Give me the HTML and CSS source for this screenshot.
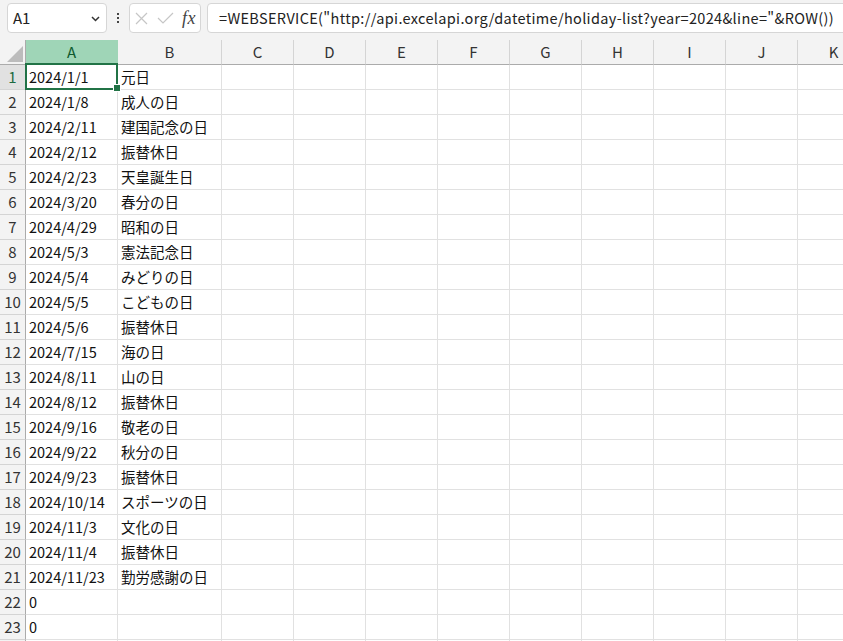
FILE: index.html
```html
<!DOCTYPE html>
<html lang="ja">
<head>
<meta charset="utf-8">
<title>Excel</title>
<link rel="stylesheet" href="styles.css">
</head>
<body>
<div class="topbar">
  <div class="namebox">
    <span class="nb-text">A1</span>
    <svg class="chev" width="9" height="6" viewBox="0 0 9 6"><polyline points="1,1 4.5,4.5 8,1" fill="none" stroke="#333" stroke-width="1.5"/></svg>
  </div>
  <div class="dots"><span></span><span></span><span></span></div>
  <div class="fxbox">
    <svg class="ico-x" width="13" height="13" viewBox="0 0 13 13"><path d="M1 1 L12 12 M12 1 L1 12" stroke="#c6c6c6" stroke-width="1.2" fill="none"/></svg>
    <svg class="ico-ok" width="17" height="12" viewBox="0 0 17 12"><path d="M1 6 L6 11 L16 1" stroke="#c6c6c6" stroke-width="1.2" fill="none"/></svg>
    <span class="fx">fx</span>
  </div>
  <div class="formula">=WEBSERVICE("http://api.excelapi.org/datetime/holiday-list?year=2024&amp;line="&amp;ROW())</div>
</div>

<div class="sheet">
  <div class="row head">
    <div class="corner"><span class="tri"></span></div>
    <div class="ch sel">A</div><div class="ch">B</div><div class="ch">C</div><div class="ch">D</div><div class="ch">E</div><div class="ch">F</div><div class="ch">G</div><div class="ch">H</div><div class="ch">I</div><div class="ch">J</div><div class="ch">K</div>
  </div>
  <div class="row"><div class="rh rsel">1</div><div class="c active">2024/1/1</div><div class="c">元日</div><div class="c"></div><div class="c"></div><div class="c"></div><div class="c"></div><div class="c"></div><div class="c"></div><div class="c"></div><div class="c"></div><div class="c"></div></div>
  <div class="row"><div class="rh">2</div><div class="c">2024/1/8</div><div class="c">成人の日</div><div class="c"></div><div class="c"></div><div class="c"></div><div class="c"></div><div class="c"></div><div class="c"></div><div class="c"></div><div class="c"></div><div class="c"></div></div>
  <div class="row"><div class="rh">3</div><div class="c">2024/2/11</div><div class="c">建国記念の日</div><div class="c"></div><div class="c"></div><div class="c"></div><div class="c"></div><div class="c"></div><div class="c"></div><div class="c"></div><div class="c"></div><div class="c"></div></div>
  <div class="row"><div class="rh">4</div><div class="c">2024/2/12</div><div class="c">振替休日</div><div class="c"></div><div class="c"></div><div class="c"></div><div class="c"></div><div class="c"></div><div class="c"></div><div class="c"></div><div class="c"></div><div class="c"></div></div>
  <div class="row"><div class="rh">5</div><div class="c">2024/2/23</div><div class="c">天皇誕生日</div><div class="c"></div><div class="c"></div><div class="c"></div><div class="c"></div><div class="c"></div><div class="c"></div><div class="c"></div><div class="c"></div><div class="c"></div></div>
  <div class="row"><div class="rh">6</div><div class="c">2024/3/20</div><div class="c">春分の日</div><div class="c"></div><div class="c"></div><div class="c"></div><div class="c"></div><div class="c"></div><div class="c"></div><div class="c"></div><div class="c"></div><div class="c"></div></div>
  <div class="row"><div class="rh">7</div><div class="c">2024/4/29</div><div class="c">昭和の日</div><div class="c"></div><div class="c"></div><div class="c"></div><div class="c"></div><div class="c"></div><div class="c"></div><div class="c"></div><div class="c"></div><div class="c"></div></div>
  <div class="row"><div class="rh">8</div><div class="c">2024/5/3</div><div class="c">憲法記念日</div><div class="c"></div><div class="c"></div><div class="c"></div><div class="c"></div><div class="c"></div><div class="c"></div><div class="c"></div><div class="c"></div><div class="c"></div></div>
  <div class="row"><div class="rh">9</div><div class="c">2024/5/4</div><div class="c">みどりの日</div><div class="c"></div><div class="c"></div><div class="c"></div><div class="c"></div><div class="c"></div><div class="c"></div><div class="c"></div><div class="c"></div><div class="c"></div></div>
  <div class="row"><div class="rh">10</div><div class="c">2024/5/5</div><div class="c">こどもの日</div><div class="c"></div><div class="c"></div><div class="c"></div><div class="c"></div><div class="c"></div><div class="c"></div><div class="c"></div><div class="c"></div><div class="c"></div></div>
  <div class="row"><div class="rh">11</div><div class="c">2024/5/6</div><div class="c">振替休日</div><div class="c"></div><div class="c"></div><div class="c"></div><div class="c"></div><div class="c"></div><div class="c"></div><div class="c"></div><div class="c"></div><div class="c"></div></div>
  <div class="row"><div class="rh">12</div><div class="c">2024/7/15</div><div class="c">海の日</div><div class="c"></div><div class="c"></div><div class="c"></div><div class="c"></div><div class="c"></div><div class="c"></div><div class="c"></div><div class="c"></div><div class="c"></div></div>
  <div class="row"><div class="rh">13</div><div class="c">2024/8/11</div><div class="c">山の日</div><div class="c"></div><div class="c"></div><div class="c"></div><div class="c"></div><div class="c"></div><div class="c"></div><div class="c"></div><div class="c"></div><div class="c"></div></div>
  <div class="row"><div class="rh">14</div><div class="c">2024/8/12</div><div class="c">振替休日</div><div class="c"></div><div class="c"></div><div class="c"></div><div class="c"></div><div class="c"></div><div class="c"></div><div class="c"></div><div class="c"></div><div class="c"></div></div>
  <div class="row"><div class="rh">15</div><div class="c">2024/9/16</div><div class="c">敬老の日</div><div class="c"></div><div class="c"></div><div class="c"></div><div class="c"></div><div class="c"></div><div class="c"></div><div class="c"></div><div class="c"></div><div class="c"></div></div>
  <div class="row"><div class="rh">16</div><div class="c">2024/9/22</div><div class="c">秋分の日</div><div class="c"></div><div class="c"></div><div class="c"></div><div class="c"></div><div class="c"></div><div class="c"></div><div class="c"></div><div class="c"></div><div class="c"></div></div>
  <div class="row"><div class="rh">17</div><div class="c">2024/9/23</div><div class="c">振替休日</div><div class="c"></div><div class="c"></div><div class="c"></div><div class="c"></div><div class="c"></div><div class="c"></div><div class="c"></div><div class="c"></div><div class="c"></div></div>
  <div class="row"><div class="rh">18</div><div class="c">2024/10/14</div><div class="c">スポーツの日</div><div class="c"></div><div class="c"></div><div class="c"></div><div class="c"></div><div class="c"></div><div class="c"></div><div class="c"></div><div class="c"></div><div class="c"></div></div>
  <div class="row"><div class="rh">19</div><div class="c">2024/11/3</div><div class="c">文化の日</div><div class="c"></div><div class="c"></div><div class="c"></div><div class="c"></div><div class="c"></div><div class="c"></div><div class="c"></div><div class="c"></div><div class="c"></div></div>
  <div class="row"><div class="rh">20</div><div class="c">2024/11/4</div><div class="c">振替休日</div><div class="c"></div><div class="c"></div><div class="c"></div><div class="c"></div><div class="c"></div><div class="c"></div><div class="c"></div><div class="c"></div><div class="c"></div></div>
  <div class="row"><div class="rh">21</div><div class="c">2024/11/23</div><div class="c">勤労感謝の日</div><div class="c"></div><div class="c"></div><div class="c"></div><div class="c"></div><div class="c"></div><div class="c"></div><div class="c"></div><div class="c"></div><div class="c"></div></div>
  <div class="row"><div class="rh">22</div><div class="c">0</div><div class="c"></div><div class="c"></div><div class="c"></div><div class="c"></div><div class="c"></div><div class="c"></div><div class="c"></div><div class="c"></div><div class="c"></div><div class="c"></div></div>
  <div class="row"><div class="rh">23</div><div class="c">0</div><div class="c"></div><div class="c"></div><div class="c"></div><div class="c"></div><div class="c"></div><div class="c"></div><div class="c"></div><div class="c"></div><div class="c"></div><div class="c"></div></div>
  <div class="row"><div class="rh"></div><div class="c"></div><div class="c"></div><div class="c"></div><div class="c"></div><div class="c"></div><div class="c"></div><div class="c"></div><div class="c"></div><div class="c"></div><div class="c"></div><div class="c"></div></div>
</div>
</body>
</html>
```

FILE: styles.css
```css
* { box-sizing: border-box; }
html, body {
  margin: 0;
  padding: 0;
  width: 843px;
  height: 641px;
  overflow: hidden;
  background: #ffffff;
  font-family: "Noto Sans CJK JP", "Noto Sans", sans-serif;
  color: #111;
}

.topbar {
  height: 40px;
  background: #f3f3f3;
  display: flex;
  align-items: flex-start;
  padding: 3px 0 0 7px;
  width: 1100px;
}
.namebox {
  width: 100px;
  height: 30px;
  background: #fff;
  border: 1px solid #d6d6d6;
  border-radius: 4px;
  display: flex;
  align-items: center;
  justify-content: space-between;
  padding: 0 6px 0 5px;
  font-size: 15px;
  color: #222;
}
.nb-text { line-height: 28px; }
.chev { display: block; margin-top: 1px; }
.dots {
  width: 22px;
  height: 30px;
  display: flex;
  flex-direction: column;
  align-items: center;
  justify-content: center;
  gap: 2px;
}
.dots span {
  display: block;
  width: 2px;
  height: 2px;
  background: #444;
}
.fxbox {
  width: 72px;
  height: 30px;
  background: #fff;
  border: 1px solid #d6d6d6;
  border-radius: 4px;
  display: flex;
  align-items: center;
  padding-left: 5px;
}
.ico-x { display: block; margin-right: 9px; }
.ico-ok { display: block; margin-right: 8px; }
.fx {
  font-family: "Liberation Serif", "DejaVu Serif", serif;
  font-style: italic;
  font-size: 18px;
  color: #444;
  line-height: 28px;
  letter-spacing: 0.5px;
}
.formula {
  margin-left: 6px;
  width: 700px;
  height: 30px;
  background: #fff;
  border: 1px solid #d6d6d6;
  border-radius: 4px;
  padding-left: 11px;
  font-size: 14.5px;
  letter-spacing: 0.33px;
  line-height: 28px;
  color: #222;
  white-space: nowrap;
}

.sheet { width: 870px; }
.row {
  display: grid;
  grid-template-columns: 26px 92px 104px repeat(9, 72px);
  height: 25px;
}
.head { background: #f3f3f3; }
.corner {
  position: relative;
  border-right: 1px solid #ababab;
  border-bottom: 1px solid #ababab;
}
.tri {
  position: absolute;
  right: 2px;
  bottom: 2px;
  width: 0;
  height: 0;
  border-left: 16px solid transparent;
  border-bottom: 16px solid #bcbcbc;
}
.ch {
  border-right: 1px solid #d4d4d4;
  border-bottom: 1px solid #ababab;
  text-align: center;
  font-size: 15px;
  line-height: 24px;
  color: #333;
}
.ch.sel {
  background: #9fd5b7;
  color: #0f5a2f;
  border-right-color: #9fd5b7;
  border-bottom: 1px solid #217346;
}
.rh {
  background: #f3f3f3;
  border-right: 1px solid #ababab;
  border-bottom: 1px solid #d4d4d4;
  text-align: center;
  font-size: 15px;
  line-height: 23px;
  color: #333;
}
.rh.rsel {
  background: #e1e1e1;
  color: #1c6b40;
}
.c {
  position: relative;
  border-right: 1px solid #e1e1e1;
  border-bottom: 1px solid #e1e1e1;
  padding-left: 3px;
  font-size: 14.5px;
  line-height: 23px;
  white-space: nowrap;
  color: #111;
}
.c.active::after {
  content: "";
  position: absolute;
  left: -1px;
  top: -2px;
  right: -1px;
  bottom: -1px;
  border: 2px solid #217346;
  pointer-events: none;
}
.c.active::before {
  content: "";
  position: absolute;
  right: -4px;
  bottom: -3px;
  width: 6px;
  height: 6px;
  background: #217346;
  border: 1px solid #fff;
  z-index: 2;
}
```
